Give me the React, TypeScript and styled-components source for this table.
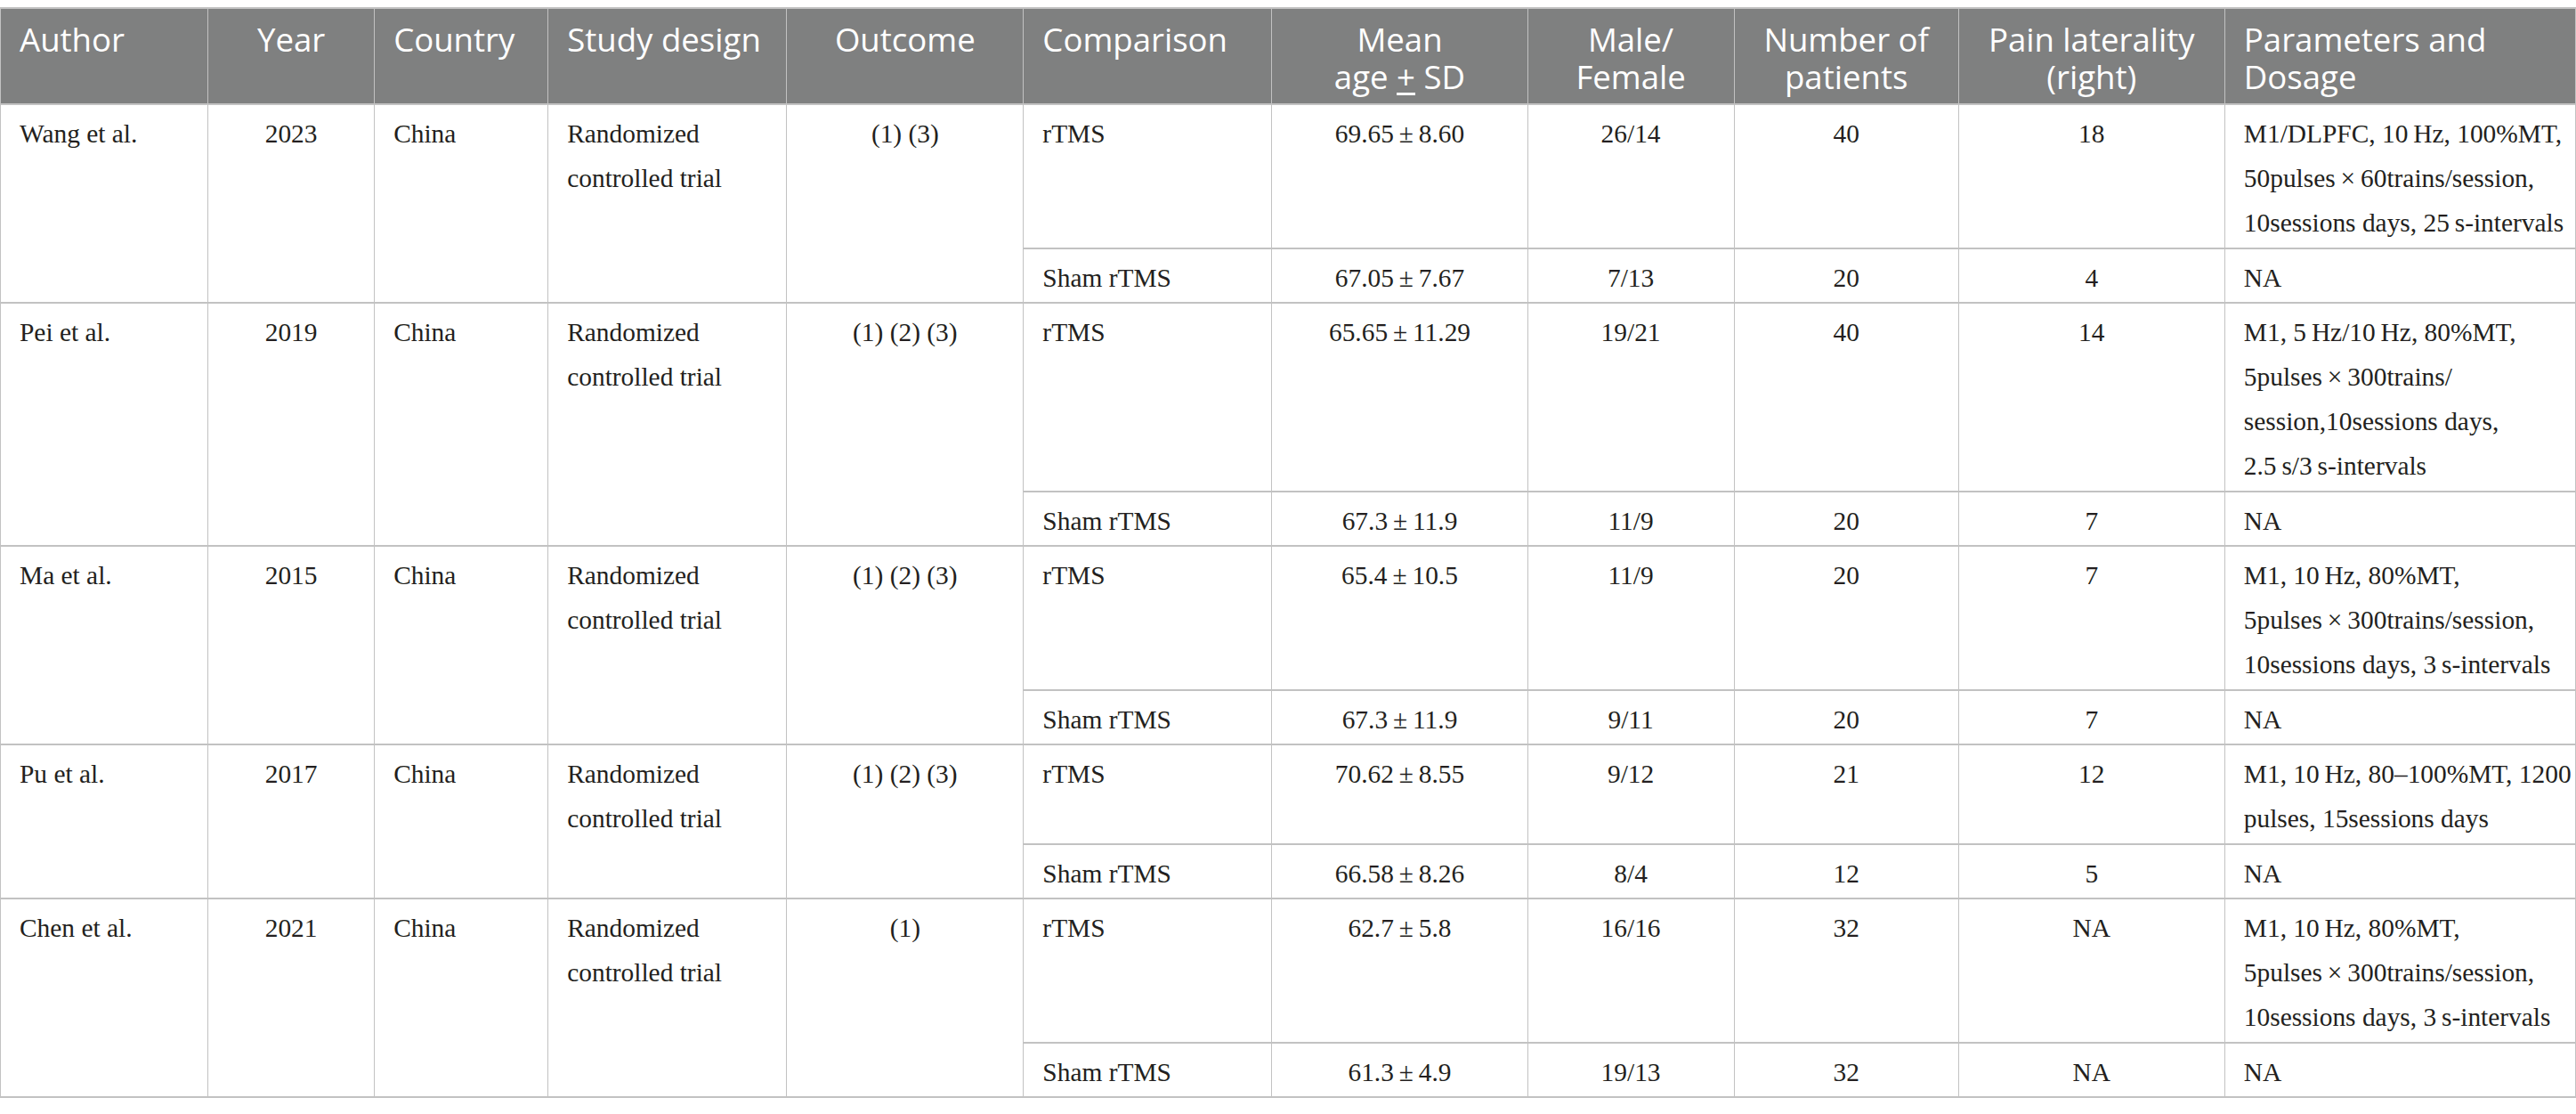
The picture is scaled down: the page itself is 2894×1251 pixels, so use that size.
import styled, { createGlobalStyle } from 'styled-components';

const GlobalStyle = createGlobalStyle`
	html, body {
		margin: 0;
		padding: 0;
		background: #ffffff;
	}
`;

const LINE = '#c2c2c2';

const Page = styled.div`
	padding-top: 8px;
	width: 2894px;
`;

const Table = styled.table`
	width: 2894px;
	table-layout: fixed;
	border-collapse: separate;
	border-spacing: 0;
	border-top: 2px solid ${LINE};
	border-left: 1px solid ${LINE};
`;

const Col = styled.col<{ $w: number }>`
	width: ${(p) => p.$w}px;
`;

const Th = styled.th<{ $center?: boolean }>`
	background: #7f8080;
	color: #ffffff;
	font-family: 'Open Sans', 'Noto Sans', sans-serif;
	font-weight: 400;
	font-size: 36.6px;
	line-height: 42px;
	text-align: ${(p) => (p.$center ? 'center' : 'left')};
	vertical-align: top;
	padding: 13px 21px 9px;
	border-right: 1px solid ${LINE};
	border-bottom: 2px solid ${LINE};
	white-space: nowrap;
`;

const Td = styled.td<{ $center?: boolean }>`
	color: #231f20;
	font-family: 'Liberation Serif', 'Times New Roman', serif;
	font-size: 29.4px;
	line-height: 50px;
	text-align: ${(p) => (p.$center ? 'center' : 'left')};
	vertical-align: top;
	padding: 7px 21px 2.5px;
	border-right: 1px solid ${LINE};
	border-bottom: 2px solid ${LINE};
`;

const Line = styled.span`
	display: block;
	white-space: nowrap;
`;

const Under = styled.span`
	text-decoration: underline;
	text-underline-offset: 4px;
`;

const T = '\u2009';

type Arm = {
	comparison: string;
	age: string;
	sex: string;
	n: string;
	pain: string;
	params: string[];
};

type Study = {
	author: string;
	year: string;
	outcome: string;
	arms: Arm[];
};

const ma = (a: string, b: string) => `${a}${T}±${T}${b}`;

const studies: Study[] = [
	{
		author: 'Wang et al.',
		year: '2023',
		outcome: '(1) (3)',
		arms: [
			{
				comparison: 'rTMS',
				age: ma('69.65', '8.60'),
				sex: '26/14',
				n: '40',
				pain: '18',
				params: [
					`M1/DLPFC, 10${T}Hz, 100%MT,`,
					`50pulses${T}×${T}60trains/session,`,
					`10sessions days, 25${T}s-intervals`,
				],
			},
			{ comparison: 'Sham rTMS', age: ma('67.05', '7.67'), sex: '7/13', n: '20', pain: '4', params: ['NA'] },
		],
	},
	{
		author: 'Pei et al.',
		year: '2019',
		outcome: '(1) (2) (3)',
		arms: [
			{
				comparison: 'rTMS',
				age: ma('65.65', '11.29'),
				sex: '19/21',
				n: '40',
				pain: '14',
				params: [
					`M1, 5${T}Hz/10${T}Hz, 80%MT,`,
					`5pulses${T}×${T}300trains/`,
					'session,10sessions days,',
					`2.5${T}s/3${T}s-intervals`,
				],
			},
			{ comparison: 'Sham rTMS', age: ma('67.3', '11.9'), sex: '11/9', n: '20', pain: '7', params: ['NA'] },
		],
	},
	{
		author: 'Ma et al.',
		year: '2015',
		outcome: '(1) (2) (3)',
		arms: [
			{
				comparison: 'rTMS',
				age: ma('65.4', '10.5'),
				sex: '11/9',
				n: '20',
				pain: '7',
				params: [
					`M1, 10${T}Hz, 80%MT,`,
					`5pulses${T}×${T}300trains/session,`,
					`10sessions days, 3${T}s-intervals`,
				],
			},
			{ comparison: 'Sham rTMS', age: ma('67.3', '11.9'), sex: '9/11', n: '20', pain: '7', params: ['NA'] },
		],
	},
	{
		author: 'Pu et al.',
		year: '2017',
		outcome: '(1) (2) (3)',
		arms: [
			{
				comparison: 'rTMS',
				age: ma('70.62', '8.55'),
				sex: '9/12',
				n: '21',
				pain: '12',
				params: [`M1, 10${T}Hz, 80–100%MT, 1200`, 'pulses, 15sessions days'],
			},
			{ comparison: 'Sham rTMS', age: ma('66.58', '8.26'), sex: '8/4', n: '12', pain: '5', params: ['NA'] },
		],
	},
	{
		author: 'Chen et al.',
		year: '2021',
		outcome: '(1)',
		arms: [
			{
				comparison: 'rTMS',
				age: ma('62.7', '5.8'),
				sex: '16/16',
				n: '32',
				pain: 'NA',
				params: [
					`M1, 10${T}Hz, 80%MT,`,
					`5pulses${T}×${T}300trains/session,`,
					`10sessions days, 3${T}s-intervals`,
				],
			},
			{ comparison: 'Sham rTMS', age: ma('61.3', '4.9'), sex: '19/13', n: '32', pain: 'NA', params: ['NA'] },
		],
	},
];

const widths = [233, 187, 195, 268, 266, 279, 287, 232, 252, 299, 394];

const ArmCells = ({ arm }: { arm: Arm }) => (
	<>
		<Td>{arm.comparison}</Td>
		<Td $center>{arm.age}</Td>
		<Td $center>{arm.sex}</Td>
		<Td $center>{arm.n}</Td>
		<Td $center>{arm.pain}</Td>
		<Td>
			{arm.params.map((l, i) => (
				<Line key={i}>{l}</Line>
			))}
		</Td>
	</>
);

export default function App() {
	return (
		<Page>
			<GlobalStyle />
			<Table>
				<colgroup>
					{widths.map((w, i) => (
						<Col key={i} $w={w} />
					))}
				</colgroup>
				<thead>
					<tr>
						<Th>Author</Th>
						<Th $center>Year</Th>
						<Th>Country</Th>
						<Th>Study design</Th>
						<Th $center>Outcome</Th>
						<Th>Comparison</Th>
						<Th $center>
							<Line>Mean</Line>
							<Line>
								age <Under>+</Under> SD
							</Line>
						</Th>
						<Th $center>
							<Line>Male/</Line>
							<Line>Female</Line>
						</Th>
						<Th $center>
							<Line>Number of</Line>
							<Line>patients</Line>
						</Th>
						<Th $center>
							<Line>Pain laterality</Line>
							<Line>(right)</Line>
						</Th>
						<Th>
							<Line>Parameters and</Line>
							<Line>Dosage</Line>
						</Th>
					</tr>
				</thead>
				<tbody>
					{studies.map((s) => [
						<tr key={s.author + '-a'}>
							<Td rowSpan={2}>{s.author}</Td>
							<Td rowSpan={2} $center>
								{s.year}
							</Td>
							<Td rowSpan={2}>China</Td>
							<Td rowSpan={2}>
								<Line>Randomized</Line>
								<Line>controlled trial</Line>
							</Td>
							<Td rowSpan={2} $center>
								{s.outcome}
							</Td>
							<ArmCells arm={s.arms[0]} />
						</tr>,
						<tr key={s.author + '-b'}>
							<ArmCells arm={s.arms[1]} />
						</tr>,
					])}
				</tbody>
			</Table>
		</Page>
	);
}
